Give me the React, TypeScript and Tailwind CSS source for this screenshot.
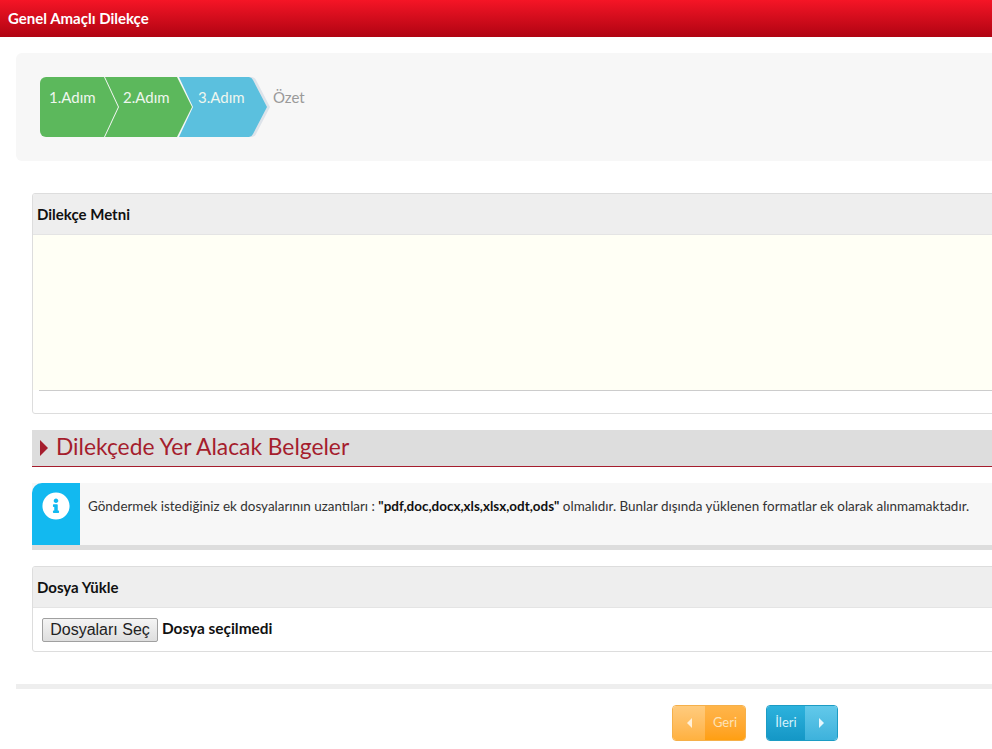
import { FaInfoCircle } from "react-icons/fa";

const font = { fontFamily: 'Lato, "Noto Sans", sans-serif' };

function Step({
  label,
  fill,
  path,
  width,
  textLeft,
  outline,
}: {
  label: string;
  fill: string;
  path: string;
  width: number;
  textLeft: string;
  outline?: boolean;
}) {
  return (
    <div className="relative h-[60px] shrink-0" style={{ width, marginRight: -14 }}>
      <svg className="absolute inset-0 overflow-visible" width={width} height={60} viewBox={`0 0 ${width} 60`}>
        {outline && <path d={path} fill="#dde3ea" transform="translate(3 0)" />}
        <path d={path} fill={fill} />
      </svg>
      <span className={`absolute top-[10px] text-[15px] leading-5 text-[#eef6ee] ${textLeft}`}>{label}</span>
    </div>
  );
}

function PanelHeading({ children }: { children: string }) {
  return (
    <div className="flex h-[41px] items-center border-b border-[#e4e4e4] bg-[#eeeeee] pl-1 text-[15px] font-bold text-[#111]">
      {children}
    </div>
  );
}

function Triangle({ dir, className }: { dir: "left" | "right"; className: string }) {
  return (
    <svg className={className} viewBox="0 0 8 16">
      <path d={dir === "right" ? "M0 0L8 8L0 16Z" : "M8 0L0 8L8 16Z"} fill="currentColor" />
    </svg>
  );
}

export default function App() {
  return (
    <div className="h-[749px] w-[992px] overflow-hidden bg-white" style={font}>
      <div className="w-[1100px]">
        {/* Header */}
        <div className="flex h-[37px] items-center bg-gradient-to-b from-[#f51526] to-[#b00412] pl-2 text-[15px] font-bold text-white">
          Genel Amaçlı Dilekçe
        </div>

        <div className="pl-4">
          {/* Wizard */}
          <div className="mt-4 flex h-[108px] items-start rounded-l-md bg-[#f7f7f7] pl-6 pt-6">
            <Step
              label="1.Adım"
              fill="#5cb85c"
              width={78}
              textLeft="left-[9px]"
              path="M6 0H64L78 30L64 60H6A6 6 0 0 1 0 54V6A6 6 0 0 1 6 0Z"
            />
            <Step
              label="2.Adım"
              fill="#5cb85c"
              width={88}
              textLeft="left-[19px]"
              path="M1 0H73L88 30L73 60H1L15 30Z"
            />
            <Step
              label="3.Adım"
              fill="#5bc0de"
              width={89}
              textLeft="left-[20px]"
              path="M1 0H71A5 5 0 0 1 75 3L89 30L75 57A5 5 0 0 1 71 60H1L15 30Z"
              outline
            />
            <span className="mt-[10px] ml-[20px] text-[15px] leading-5 text-[#9a9a9a]">Özet</span>
          </div>

          <div className="pl-4">
            {/* Dilekçe Metni */}
            <div className="mt-8 h-[221px] overflow-hidden rounded-[3px] border border-[#dddddd]">
              <PanelHeading>Dilekçe Metni</PanelHeading>
              <div className="h-[155px] bg-[#fffff5]" />
              <div className="ml-[6px] border-t border-[#cccccc]" />
            </div>

            {/* Section title */}
            <div className="mt-4 flex h-[37px] items-center border-b border-[#a51d2d] bg-[#dddddd] pl-[8px] text-[22.8px] text-[#a51d2d]">
              <Triangle dir="right" className="mr-[8px] h-[16px] w-[8px] shrink-0" />
              <span className="pb-[3px]">Dilekçede Yer Alacak Belgeler</span>
            </div>

            {/* Info */}
            <div className="mt-4 flex h-[67px] border-b-[5px] border-[#dddddd] bg-[#f7f7f7]">
              <div className="flex w-12 shrink-0 justify-center rounded-tl-[10px] bg-[#12b9f0] pt-[9px]">
                <FaInfoCircle className="h-7 w-7 text-white" />
              </div>
              <p className="pl-2 pt-[14px] text-[13.45px] leading-[18px] text-[#333]">
                Göndermek istediğiniz ek dosyalarının uzantıları : <b className="text-[#111]">"pdf,doc,docx,xls,xlsx,odt,ods"</b> olmalıdır. Bunlar dışında yüklenen formatlar ek olarak alınmamaktadır.
              </p>
            </div>

            {/* Dosya Yükle */}
            <div className="mt-4 h-[86px] overflow-hidden rounded-[3px] border border-[#dddddd]">
              <PanelHeading>Dosya Yükle</PanelHeading>
              <div className="mt-[10px] flex h-[24px] items-center pl-[9px]">
                <button
                  className="h-[24px] w-[116px] rounded-[2px] border border-[#a0a0a0] bg-gradient-to-b from-[#f4f4f4] to-[#dedede] text-[16px] leading-none text-[#222]"
                  style={{ fontFamily: '"Liberation Sans", sans-serif' }}
                >
                  Dosyaları Seç
                </button>
                <span className="ml-[4px] mb-[2px] text-[15.4px] leading-none font-bold text-[#111]">Dosya seçilmedi</span>
              </div>
            </div>
          </div>

          {/* Divider */}
          <div className="mt-8 h-[5px] bg-[#eeeeee]" />

          {/* Nav buttons */}
          <div className="mt-4 flex pl-[656px] text-[13px]">
            <button className="flex h-9 w-[74px] overflow-hidden rounded-[4px] border border-[#f5b04a] text-[#fde3b8]">
              <span className="flex h-full w-8 items-center justify-center bg-gradient-to-b from-[#ffcb7d] to-[#ffb13f]">
                <Triangle dir="left" className="h-[10px] w-[5px] text-[#fff0d8]" />
              </span>
              <span className="flex h-full flex-1 items-center justify-center bg-gradient-to-b from-[#ffb54a] to-[#ff9f10]">Geri</span>
            </button>
            <button className="ml-5 flex h-9 w-[72px] overflow-hidden rounded-[4px] border border-[#1c9cc4] text-[#d5f1fb]">
              <span className="flex h-full flex-1 items-center justify-center bg-gradient-to-b from-[#2cb2dd] to-[#1497c6]">İleri</span>
              <span className="flex h-full w-8 items-center justify-center bg-gradient-to-b from-[#62c9ea] to-[#3db2dc]">
                <Triangle dir="right" className="h-[10px] w-[5px] text-[#e6f7fd]" />
              </span>
            </button>
          </div>
        </div>
      </div>
    </div>
  );
}
